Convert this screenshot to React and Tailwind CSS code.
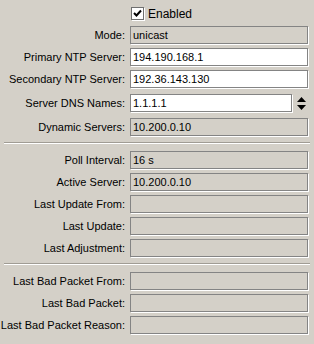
import React from 'react';

const top = [
  { label: 'Mode:', value: 'unicast', ro: true },
  { label: 'Primary NTP Server:', value: '194.190.168.1' },
  { label: 'Secondary NTP Server:', value: '192.36.143.130' },
  { label: 'Server DNS Names:', value: '1.1.1.1', spin: true },
  { label: 'Dynamic Servers:', value: '10.200.0.10', ro: true },
];

const mid = [
  { label: 'Poll Interval:', value: '16 s', ro: true },
  { label: 'Active Server:', value: '10.200.0.10', ro: true },
  { label: 'Last Update From:', value: '', ro: true },
  { label: 'Last Update:', value: '', ro: true },
  { label: 'Last Adjustment:', value: '', ro: true },
];

const bottom = [
  { label: 'Last Bad Packet From:', value: '', ro: true },
  { label: 'Last Bad Packet:', value: '', ro: true },
  { label: 'Last Bad Packet Reason:', value: '', ro: true },
];

function Row({ label, value, ro, spin }) {
  return (
    <div className={`flex items-center h-[18px] ${spin ? 'my-[2px]' : ''}`}>
      <div className="w-[126px] shrink-0 text-right pr-[1px] whitespace-nowrap">{label}</div>
      <div className="ml-[4px] flex items-center">
        <div
          className={`h-[18px] ${spin ? 'w-[162px]' : 'w-[178px]'} border border-[#848484] shadow-[1px_1px_0_#ffffff] px-[2px] flex items-center leading-none ${ro ? 'bg-[#d4d0c8]' : 'bg-white'}`}
        >
          {value}
        </div>
        {spin && (
          <svg width="9" height="13" viewBox="0 0 9 13" className="ml-[5px]">
            <path d="M4.5 0 L9 5 L0 5 Z" fill="#000" />
            <path d="M0 8 L9 8 L4.5 13 Z" fill="#000" />
          </svg>
        )}
      </div>
    </div>
  );
}

function Separator() {
  return <div className="mx-[4px] h-[2px] border-t border-[#a09c94] border-b border-b-white" />;
}

export default function App() {
  return (
    <div
      className="w-[314px] h-[344px] bg-[#d4d0c8] text-black text-[11px] overflow-hidden"
      style={{ fontFamily: '"Liberation Sans", Arial, sans-serif' }}
    >
      <div className="pt-[6px]">
        <div className="flex items-center h-[15px] ml-[131px]">
          <div className="w-[13px] h-[13px] bg-white border border-[#6f6f6f] shadow-[1px_1px_0_#ffffff] flex items-center justify-center">
            <svg width="9" height="9" viewBox="0 0 9 9">
              <path d="M1 4 L3.5 6.5 L8 1.5" stroke="#000" strokeWidth="2" fill="none" />
            </svg>
          </div>
          <span className="ml-[4px] text-[12px]">Enabled</span>
        </div>

        <div className="mt-[5px] flex flex-col gap-[4px]">
          {top.map(r => <Row key={r.label} {...r} />)}
        </div>

        <div className="pt-[6px] pb-[7px]"><Separator /></div>

        <div className="flex flex-col gap-[4px]">
          {mid.map(r => <Row key={r.label} {...r} />)}
        </div>

        <div className="pt-[6px] pb-[7px]"><Separator /></div>

        <div className="flex flex-col gap-[4px]">
          {bottom.map(r => <Row key={r.label} {...r} />)}
        </div>
      </div>
    </div>
  );
}
